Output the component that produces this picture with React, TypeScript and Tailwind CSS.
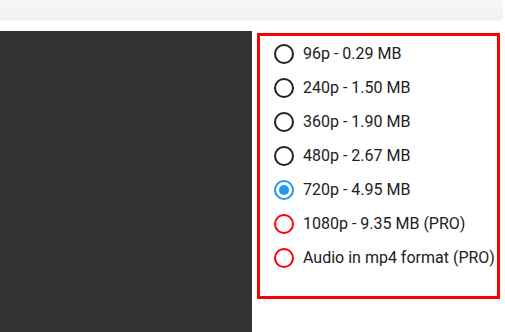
import React from "react";

type Opt = { label: string; kind: "normal" | "selected" | "pro" };

const options: Opt[] = [
  { label: "96p - 0.29 MB", kind: "normal" },
  { label: "240p - 1.50 MB", kind: "normal" },
  { label: "360p - 1.90 MB", kind: "normal" },
  { label: "480p - 2.67 MB", kind: "normal" },
  { label: "720p - 4.95 MB", kind: "selected" },
  { label: "1080p - 9.35 MB (PRO)", kind: "pro" },
  { label: "Audio in mp4 format (PRO)", kind: "pro" },
];

function Radio({ kind }: { kind: Opt["kind"] }) {
  if (kind === "selected") {
    return (
      <span className="flex h-[20px] w-[20px] shrink-0 items-center justify-center rounded-full border-2 border-[#2196f3]">
        <span className="h-[10px] w-[10px] rounded-full bg-[#2196f3]" />
      </span>
    );
  }
  return (
    <span
      className={
        kind === "pro"
          ? "h-[20px] w-[20px] shrink-0 rounded-full border-2 border-[#ff0000]"
          : "h-[20px] w-[20px] shrink-0 rounded-full border-2 border-[#212121]"
      }
    />
  );
}

export default function App() {
  return (
    <div
      className="relative h-[332px] w-[505px] overflow-hidden bg-white"
      style={{ fontFamily: "Roboto, 'Liberation Sans', sans-serif" }}
    >
      <div className="h-[20px] w-[503px] rounded-br-[4px] bg-gradient-to-b from-[#f8f8f8] to-[#f1f1f1] shadow-[0_1px_1px_rgba(0,0,0,0.04)]" />
      <div className="mt-[11px] flex">
        <div className="h-[301px] w-[252px] shrink-0 bg-[#333333]" />
        <div className="ml-[5px] mt-[2px] h-[266px] w-[243px] border-[3px] border-[#ff0000] pl-[14px] pt-[1px]">
          {options.map((o) => (
            <div key={o.label} className="flex h-[34px] items-center gap-[9px]">
              <Radio kind={o.kind} />
              <span className="whitespace-nowrap text-[16px] leading-none text-[#212121]">
                {o.label}
              </span>
            </div>
          ))}
        </div>
      </div>
    </div>
  );
}
